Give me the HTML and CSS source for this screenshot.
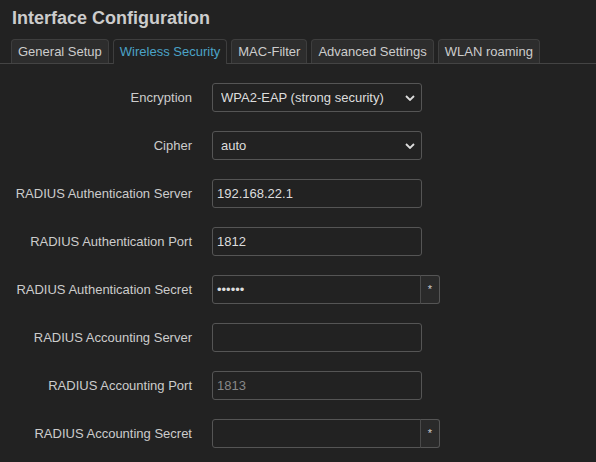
FILE: index.html
```html
<!DOCTYPE html>
<html>
<head>
<meta charset="utf-8">
<link rel="stylesheet" href="styles.css">
</head>
<body>
<h2 class="title">Interface Configuration</h2>
<ul class="tabs">
  <li class="tab">General Setup</li>
  <li class="tab active">Wireless Security</li>
  <li class="tab">MAC-Filter</li>
  <li class="tab">Advanced Settings</li>
  <li class="tab">WLAN roaming</li>
</ul>
<div class="form">
  <label class="label">Encryption</label>
  <div class="select-wrap">
    <select class="field"><option>WPA2-EAP (strong security)</option></select>
    <svg class="chev" width="10" height="6" viewBox="0 0 10 6"><path d="M1 1 L5 5 L9 1" fill="none" stroke="#ddd" stroke-width="1.8"/></svg>
  </div>

  <label class="label">Cipher</label>
  <div class="select-wrap">
    <select class="field"><option>auto</option></select>
    <svg class="chev" width="10" height="6" viewBox="0 0 10 6"><path d="M1 1 L5 5 L9 1" fill="none" stroke="#ddd" stroke-width="1.8"/></svg>
  </div>

  <label class="label">RADIUS Authentication Server</label>
  <div><input class="field text" type="text" value="192.168.22.1"></div>

  <label class="label">RADIUS Authentication Port</label>
  <div><input class="field text" type="text" value="1812"></div>

  <label class="label">RADIUS Authentication Secret</label>
  <div class="group">
    <input class="field text pw" type="password" value="secret">
    <button class="reveal">*</button>
  </div>

  <label class="label">RADIUS Accounting Server</label>
  <div><input class="field text" type="text" value=""></div>

  <label class="label">RADIUS Accounting Port</label>
  <div><input class="field text" type="text" placeholder="1813"></div>

  <label class="label">RADIUS Accounting Secret</label>
  <div class="group">
    <input class="field text pw" type="password" value="">
    <button class="reveal">*</button>
  </div>
</div>
</body>
</html>
```
FILE: styles.css
```css
html, body {
  margin: 0;
  padding: 0;
  background: #222222;
  font-family: "Liberation Sans", Arial, sans-serif;
  color: #cccccc;
  height: 462px;
  overflow: hidden;
}
.title {
  margin: 0;
  padding: 8px 0 0 12px;
  font-size: 18px;
  font-weight: bold;
  line-height: 20px;
  color: #cccccc;
}
.tabs {
  list-style: none;
  margin: 11px 0 0 0;
  padding: 0 0 0 11px;
  display: flex;
  gap: 4px;
  border-bottom: 1px solid #444444;
  height: 24px;
}
.tab {
  box-sizing: border-box;
  height: 24px;
  padding: 0 6px;
  border: 1px solid #3e3e3e;
  border-bottom: none;
  border-radius: 4px 4px 0 0;
  background: #2d2d2d;
  font-size: 13px;
  line-height: 23px;
  color: #cccccc;
}
.tab.active {
  background: #222222;
  color: #4ba3c7;
  height: 25px;
  margin-bottom: -1px;
}
.form {
  display: grid;
  grid-template-columns: 192px auto;
  column-gap: 20px;
  row-gap: 19px;
  align-items: center;
  padding-top: 19px;
}
.label {
  text-align: right;
  font-size: 13px;
  color: #cccccc;
}
.select-wrap {
  position: relative;
  width: 210px;
}
.field {
  box-sizing: border-box;
  width: 210px;
  height: 29px;
  margin: 0;
  background: #222222;
  border: 1px solid #555555;
  border-radius: 3px;
  color: #dddddd;
  font-family: "Liberation Sans", Arial, sans-serif;
  font-size: 13px;
  padding: 0 0 0 8px;
  outline: none;
  display: block;
}
select.field {
  appearance: none;
  -webkit-appearance: none;
}
.chev {
  position: absolute;
  right: 7px;
  top: 12px;
  pointer-events: none;
}
.text {
  padding-left: 4px;
}
.text::placeholder {
  color: #888888;
}
.group {
  display: flex;
}
.pw {
  width: 209px;
  border-radius: 3px 0 0 3px;
  letter-spacing: 0;
}
.reveal {
  box-sizing: border-box;
  width: 20px;
  height: 29px;
  margin: 0;
  padding: 0;
  background: #2a2a2a;
  border: 1px solid #555555;
  border-left: 1px solid #4a4a4a;
  border-radius: 0 3px 3px 0;
  color: #cccccc;
  font-family: "Liberation Sans", Arial, sans-serif;
  font-size: 11px;
  line-height: 27px;
  margin-left: -1px;
}
```
